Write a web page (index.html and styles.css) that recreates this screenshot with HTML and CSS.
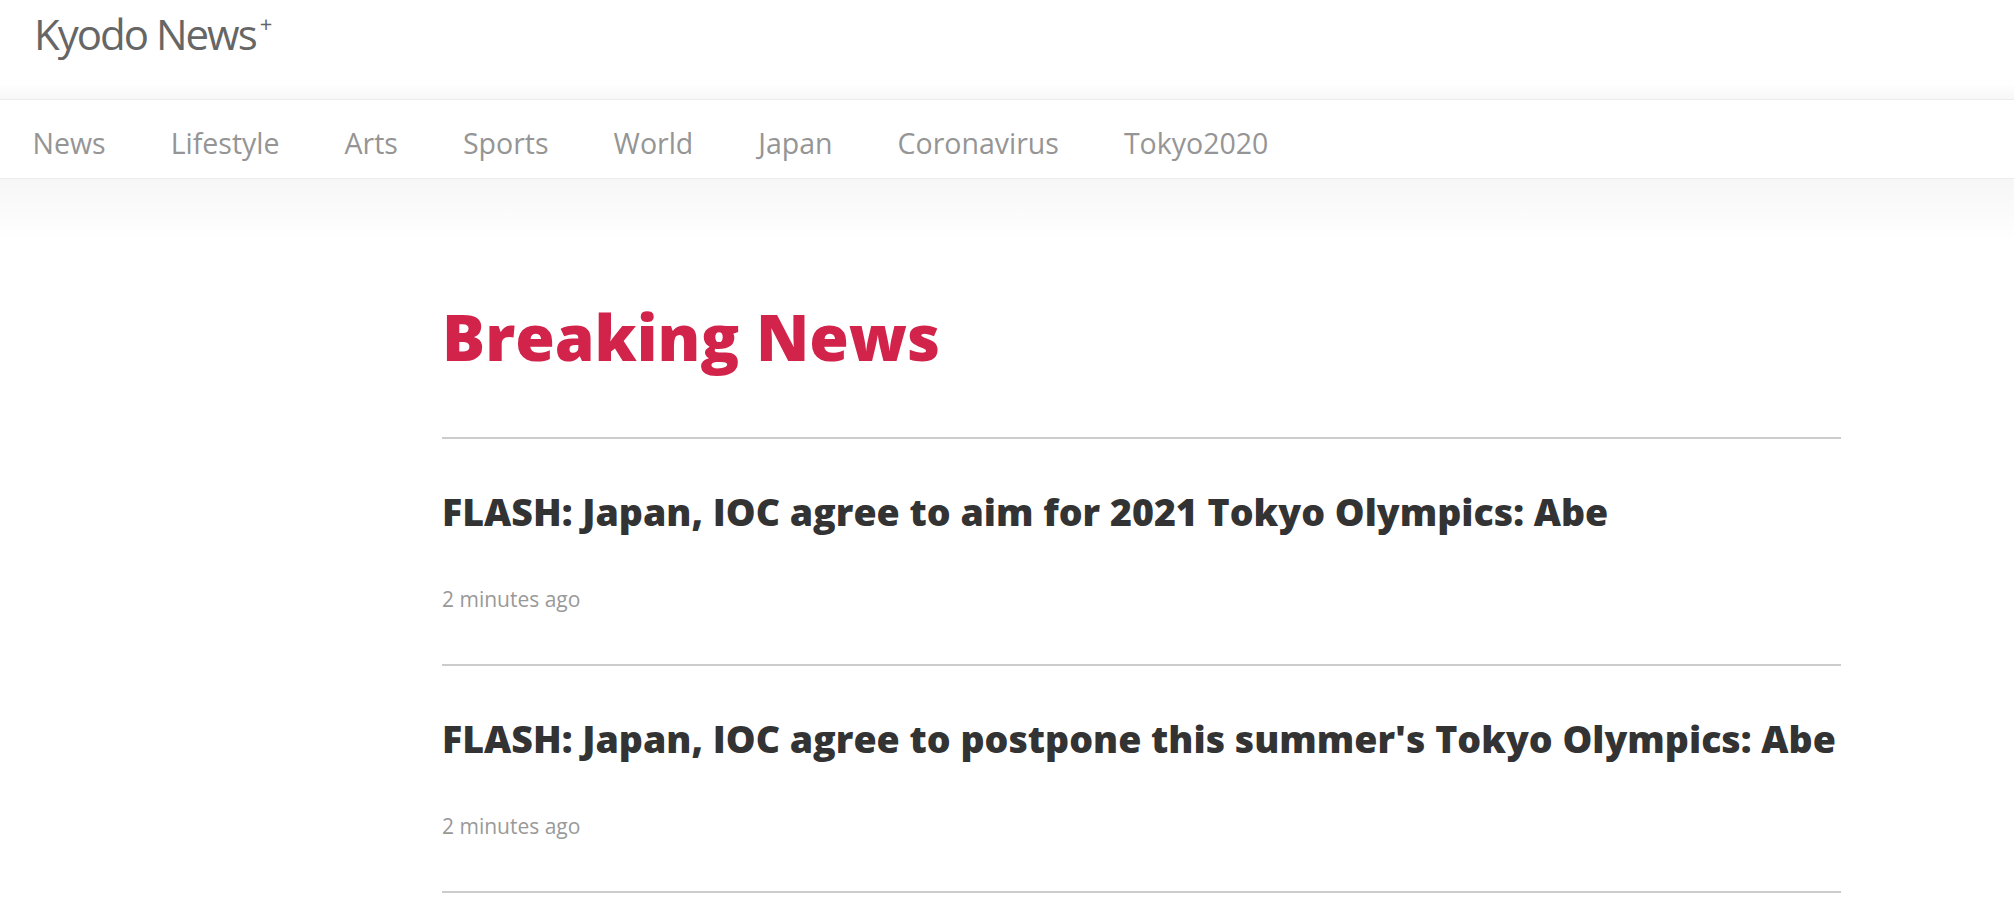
FILE: index.html
```html
<!DOCTYPE html>
<html lang="en">
<head>
    <meta charset="UTF-8">
    <title>Breaking News | Kyodo News+</title>
    <link rel="stylesheet" href="styles.css">
</head>
<body>
	<header class="top">
		<div class="logo-bar">
			<a class="logo" href="#">Kyodo News<sup>+</sup></a>
		</div>
		<nav class="menu">
			<a href="#">News</a>
			<a href="#">Lifestyle</a>
			<a href="#">Arts</a>
			<a href="#">Sports</a>
			<a href="#">World</a>
			<a href="#">Japan</a>
			<a href="#">Coronavirus</a>
			<a href="#">Tokyo2020</a>
		</nav>
	</header>
	<div class="page">
		<aside class="side"></aside>
		<main class="main">
			<h1 class="title">Breaking News</h1>
			<ul class="list">
				<li class="item">
					<h2 class="headline">FLASH: Japan, IOC agree to aim for 2021 Tokyo Olympics: Abe</h2>
					<p class="time">2 minutes ago</p>
				</li>
				<li class="item">
					<h2 class="headline">FLASH: Japan, IOC agree to postpone this summer's Tokyo Olympics: Abe</h2>
					<p class="time">2 minutes ago</p>
				</li>
			</ul>
		</main>
	</div>
</body>
</html>
```

FILE: styles.css
```css
body {
	margin: 0;
	padding: 0;
	font-family: "Open Sans", "DejaVu Sans", sans-serif;
	background: #fff;
}

a {
	text-decoration: none;
}

.logo-bar {
	padding-top: 13px;
	box-sizing: border-box;
	height: 100px;
	background: linear-gradient(#fff 85%, #f7f7f7);
	border-bottom: 1px solid #ececec;
}
.logo {
	display: inline-block;
	margin-left: 34px;
	font-size: 42px;
	line-height: 42px;
	letter-spacing: -2px;
	color: #666;
}
.logo sup {
	font-size: 22px;
	line-height: 0;
	vertical-align: 18px;
	margin-left: 4px;
}

.menu {
	display: flex;
	padding: 23px 0 15px;
	background: #fff;
	border-bottom: 1px solid #ececec;
}
.menu a {
	padding: 0 32.5px;
	font-size: 28.5px;
	line-height: 40px;
	color: #959595;
}

.page {
	display: grid;
	grid-template-columns: 442px 1399px;
	background: linear-gradient(#f6f6f6, #fff 62px);
}

.title {
	margin: 0 0 61px;
	padding-top: 120px;
	font-size: 64px;
	line-height: 1.2;
	font-weight: 800;
	color: #d2234b;
}

.list {
	list-style: none;
	margin: 0;
	padding: 0;
	border-bottom: 2px solid #cccccc;
}
.item {
	padding: 48px 0 50px;
	border-top: 2px solid #cccccc;
}
.headline {
	margin: 0 0 47px;
	font-size: 37.5px;
	line-height: 50px;
	font-weight: 800;
	color: #333;
}
.time {
	margin: 0;
	font-size: 21px;
	line-height: 30px;
	color: #999;
}
```
